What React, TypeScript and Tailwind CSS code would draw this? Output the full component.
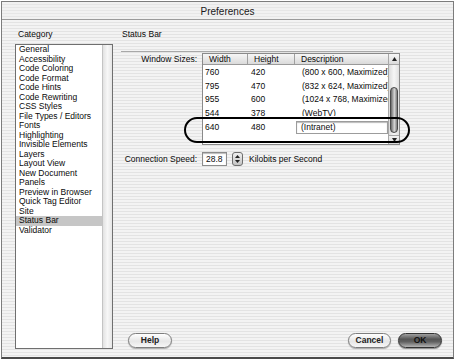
import React from "react";

const cats = [
  "General",
  "Accessibility",
  "Code Coloring",
  "Code Format",
  "Code Hints",
  "Code Rewriting",
  "CSS Styles",
  "File Types / Editors",
  "Fonts",
  "Highlighting",
  "Invisible Elements",
  "Layers",
  "Layout View",
  "New Document",
  "Panels",
  "Preview in Browser",
  "Quick Tag Editor",
  "Site",
  "Status Bar",
  "Validator",
];

const rows = [
  ["760", "420", "(800 x 600, Maximized)"],
  ["795", "470", "(832 x 624, Maximized)"],
  ["955", "600", "(1024 x 768, Maximized)"],
];

function Row({ w, h, d }: { w: string; h: string; d: string }) {
  return (
    <div className="flex h-[13.5px] items-center shrink-0">
      <div className="w-[45px] pl-[2px]">{w}</div>
      <div className="w-[47px] pl-[3px]">{h}</div>
      <div className="flex-1 pl-[7px] overflow-hidden whitespace-nowrap">{d}</div>
    </div>
  );
}

export default function App() {
  return (
    <div className="relative w-[458px] h-[364px] bg-white pl-[1px] pt-[1px] font-['Liberation_Sans',Arial,sans-serif] text-[8.5px] text-[#0a0a0a] overflow-hidden">
      <div className="w-[453px] h-[358px] border border-[#7c7c7c] border-b-2 border-b-[#4a4a4a] flex flex-col bg-[repeating-linear-gradient(180deg,#f3f3f3_0px,#f3f3f3_2px,#e3e3e3_2px,#e3e3e3_3px)]">
        <div className="h-[18px] shrink-0 border-b border-[#9a9a9a] bg-[repeating-linear-gradient(180deg,#f1f1f1_0px,#f1f1f1_2px,#e6e6e6_2px,#e6e6e6_3px)] text-center text-[10px] leading-[17px] pt-[1px] text-[#1a1a1a]">
          Preferences
        </div>
        <div className="flex flex-1 min-h-0">
          <div className="ml-[13px] w-[98px] flex flex-col pt-[9px] pb-[8px] shrink-0">
            <div className="h-[10px] leading-[10px] pl-[3px]">Category</div>
            <div className="mt-[5px] flex-1 border border-[#6f6f6f] bg-white flex">
              <div className="w-[86px] flex flex-col">
                {cats.map((c) => (
                  <div
                    key={c}
                    className={
                      "h-[9.5px] leading-[9.5px] pl-[3px] whitespace-nowrap " +
                      (c === "Status Bar" ? "bg-[#c6c6c6]" : "")
                    }
                  >
                    {c}
                  </div>
                ))}
              </div>
              <div className="flex-1 border-l border-[#c4c4c4] bg-[linear-gradient(90deg,#e2e2e2,#f7f7f7_50%,#e6e6e6)]" />
            </div>
          </div>

          <div className="flex-1 ml-[9px] pr-[11px] pt-[9px] pb-[9px] flex flex-col">
            <div className="h-[10px] leading-[10px]">Status Bar</div>
            <div className="mt-[12px] -ml-[1px] w-[272px] h-[1px] bg-[#a8a8a8]" />
            <div className="mt-[1px] flex">
              <div className="w-[75px] text-right leading-[10px] pt-[1px]">Window Sizes:</div>
              <div className="ml-[5px] w-[198px] h-[92px] border border-[#8a8a8a] bg-white flex">
                <div className="w-[185px] flex flex-col">
                  <div className="h-[11px] shrink-0 flex border-b border-[#9a9a9a] bg-[linear-gradient(180deg,#f6f6f6,#dadada)] leading-[10px]">
                    <div className="w-[45px] pl-[6px] border-r border-[#a0a0a0]">Width</div>
                    <div className="w-[47px] pl-[6px] border-r border-[#a0a0a0]">Height</div>
                    <div className="flex-1 pl-[6px]">Description</div>
                  </div>
                  <div className="flex-1 flex flex-col pt-[1px]">
                    {rows.map((r) => (
                      <Row key={r[0]} w={r[0]} h={r[1]} d={r[2]} />
                    ))}
                    <div className="h-[9.5px] overflow-hidden shrink-0">
                      <Row w="544" h="378" d="(WebTV)" />
                    </div>
                    <div className="flex h-[22px] items-center shrink-0">
                      <div className="w-[45px] pl-[2px]">640</div>
                      <div className="w-[47px] pl-[3px]">480</div>
                      <div className="ml-[1px] w-[92px] h-[13px] border border-[#9c9c9c] shadow-[inset_0_1px_1px_#bbb] bg-white pl-[4px] leading-[11px]">
                        (Intranet)
                      </div>
                    </div>
                  </div>
                </div>
                <div className="flex-1 border-l border-[#a8a8a8] flex flex-col">
                  <div className="h-[11px] border-b border-[#a8a8a8] bg-[linear-gradient(180deg,#f6f6f6,#dadada)] flex items-center justify-center">
                    <svg width="5" height="4" viewBox="0 0 5 4">
                      <path d="M2.5 0L5 4H0z" fill="#222" />
                    </svg>
                  </div>
                  <div className="flex-1 pt-[22px] bg-[linear-gradient(90deg,#dcdcdc,#f6f6f6_50%,#e0e0e0)]">
                    <div className="h-[46px] mx-[1px] rounded-full border border-[#4a4a4a] bg-[linear-gradient(90deg,#6a6a6a,#bdbdbd_45%,#d8d8d8_55%,#7a7a7a)]" />
                  </div>
                  <div className="h-[9px] border-t border-[#a8a8a8] bg-[linear-gradient(180deg,#f2f2f2,#d8d8d8)] flex items-center justify-center">
                    <svg width="5" height="4" viewBox="0 0 5 4">
                      <path d="M0 0H5L2.5 4z" fill="#222" />
                    </svg>
                  </div>
                </div>
              </div>
            </div>
            <div className="mt-[7px] flex items-center h-[14px]">
              <div className="w-[75px] text-right leading-[10px]">Connection Speed:</div>
              <div className="ml-[5px] w-[25px] h-[14px] border border-[#8c8c8c] shadow-[inset_0_1px_1px_#bbb] bg-white pl-[3px] leading-[12px]">
                28.8
              </div>
              <div className="ml-[5px] w-[11px] h-[14px] rounded-[3px] border border-[#6e6e6e] bg-[linear-gradient(180deg,#f0f0f0,#c4c4c4)] flex items-center justify-center">
                <svg width="5" height="8" viewBox="0 0 5 8">
                  <path d="M2.5 0L5 3H0z" fill="#222" />
                  <path d="M0 5H5L2.5 8z" fill="#222" />
                </svg>
              </div>
              <div className="ml-[6px] leading-[10px]">Kilobits per Second</div>
            </div>
            <div className="flex-1" />
            <div className="h-[15px] flex items-center justify-between">
              <div className="ml-[6px] w-[44px] h-[15px] rounded-full border border-[#7e7e7e] bg-[linear-gradient(180deg,#ffffff,#e6e6e6_55%,#f6f6f6)] shadow-[0_1px_1px_#aaa] flex items-center justify-center font-bold text-[#222]">
                Help
              </div>
              <div className="flex gap-[7px]">
                <div className="w-[43px] h-[15px] rounded-full border border-[#7e7e7e] bg-[linear-gradient(180deg,#ffffff,#e6e6e6_55%,#f6f6f6)] shadow-[0_1px_1px_#aaa] flex items-center justify-center font-bold text-[#222]">
                  Cancel
                </div>
                <div className="w-[44px] h-[15px] rounded-full border border-[#333] bg-[linear-gradient(180deg,#a0a0a0,#555_40%,#616161_60%,#b4b4b4)] shadow-[0_1px_1px_#888] flex items-center justify-center font-bold text-[#111]">
                  OK
                </div>
              </div>
            </div>
          </div>
        </div>
      </div>
      <div className="absolute left-[184px] top-[117px] w-[226px] h-[26px] border-2 border-black rounded-[13px] pointer-events-none" />
    </div>
  );
}
